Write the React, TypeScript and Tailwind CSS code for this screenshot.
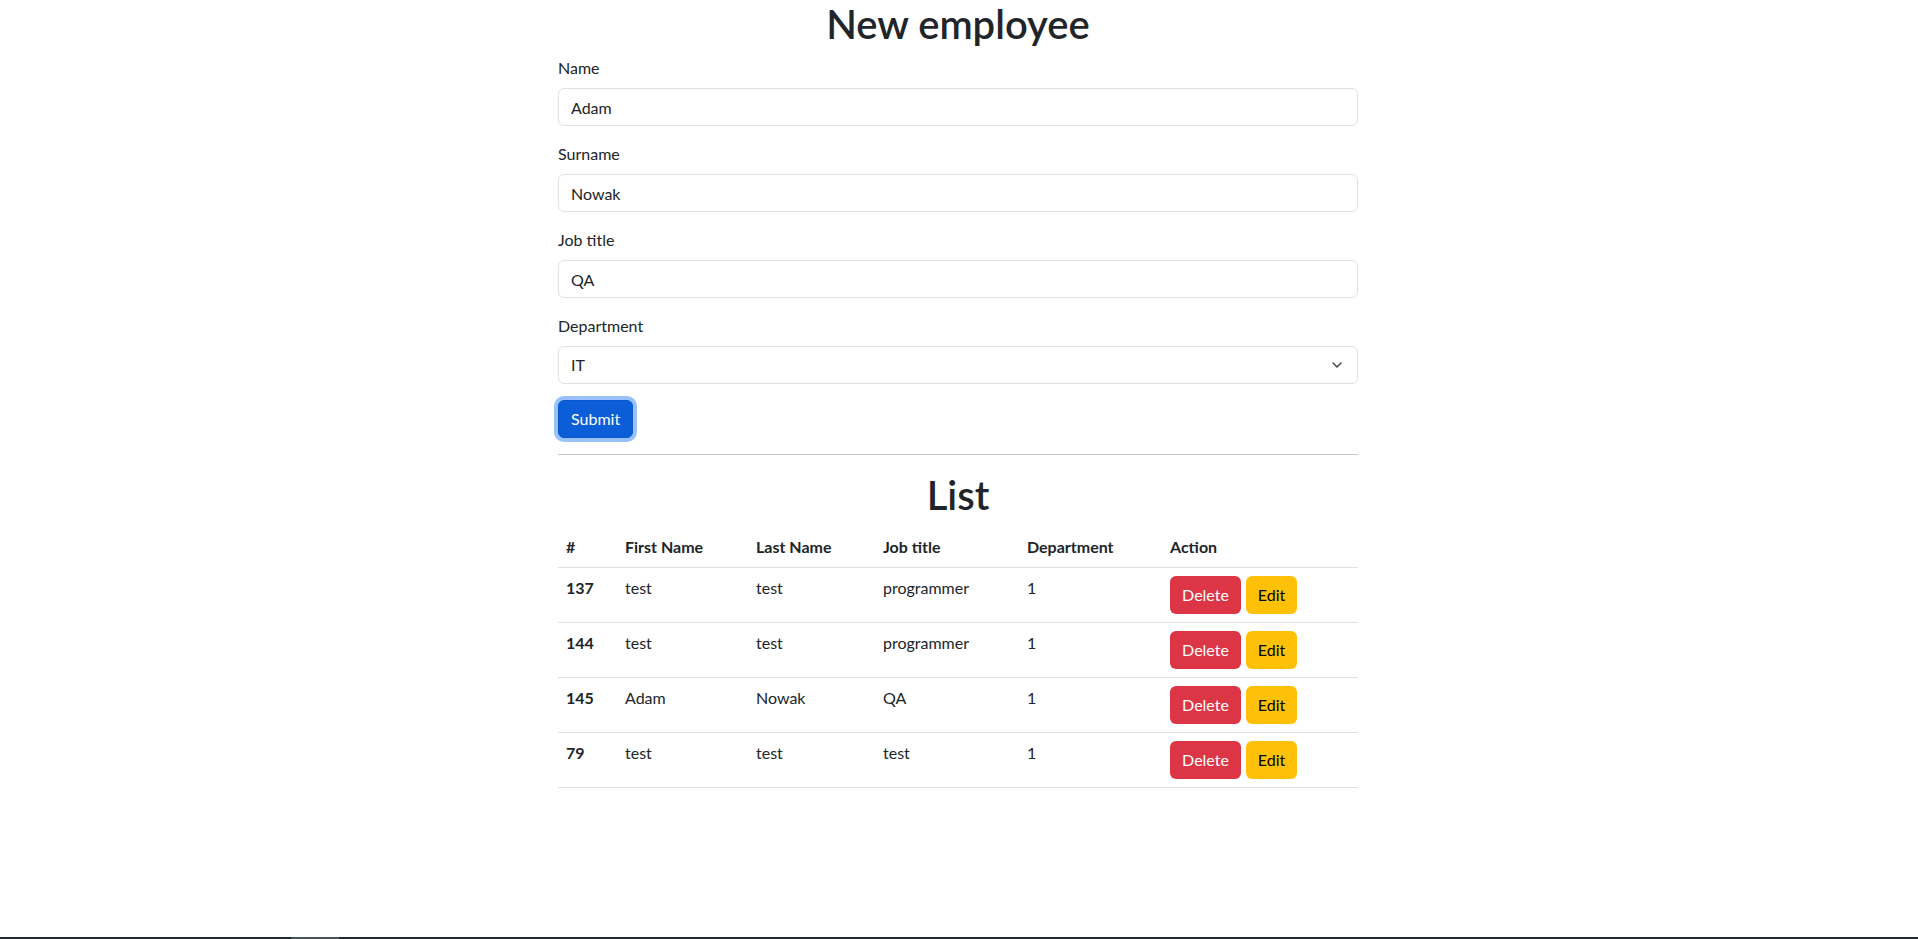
import { ChevronDown } from "lucide-react"

const rows = [
  { id: 137, first: "test", last: "test", job: "programmer", dept: "1" },
  { id: 144, first: "test", last: "test", job: "programmer", dept: "1" },
  { id: 145, first: "Adam", last: "Nowak", job: "QA", dept: "1" },
  { id: 79, first: "test", last: "test", job: "test", dept: "1" },
]

function Field({ label, value }: { label: string; value: string }) {
  return (
    <div className="mb-4">
      <label className="block mb-2 leading-6">{label}</label>
      <input
        readOnly
        value={value}
        className="block w-full h-[38px] px-3 py-1.5 leading-6 border border-[#dee2e6] rounded-[6px] text-[#212529] outline-none"
      />
    </div>
  )
}

export default function App() {
  return (
    <div
      className="flex flex-col h-screen bg-white text-[#212529] text-base leading-6"
      style={{ fontFamily: "Lato, 'Noto Sans', sans-serif" }}
    >
      <div className="w-full pr-[2px]">
        <div className="w-[800px] mx-auto">
          <h1 className="text-[40px] leading-[48px] font-semibold text-center mb-2">New employee</h1>

          <Field label="Name" value="Adam" />
          <Field label="Surname" value="Nowak" />
          <Field label="Job title" value="QA" />

          <div className="mb-4">
            <label className="block mb-2 leading-6">Department</label>
            <div className="flex items-center justify-between h-[38px] pl-3 pr-[12px] border border-[#dee2e6] rounded-[6px]">
              <span>IT</span>
              <ChevronDown className="w-4 h-4 text-[#343a40]" strokeWidth={2} />
            </div>
          </div>

          <button className="h-[38px] px-3 leading-6 text-white bg-[#0b5ed7] border border-[#0a58ca] rounded-[6px] shadow-[0_0_0_4px_rgba(49,132,253,0.5)]">
            Submit
          </button>

          <hr className="mt-4 mb-0 border-t border-[#c8c9ca]" />

          <h1 className="mt-4 text-[40px] leading-[48px] font-semibold text-center mb-2">List</h1>

          <table className="w-full border-collapse align-top table-fixed">
            <thead>
              <tr className="border-b border-[#dee2e6]">
                <th className="w-[59px] p-2 text-left font-bold">#</th>
                <th className="w-[131px] p-2 text-left font-bold">First Name</th>
                <th className="w-[127px] p-2 text-left font-bold">Last Name</th>
                <th className="w-[144px] p-2 text-left font-bold">Job title</th>
                <th className="w-[143px] p-2 text-left font-bold">Department</th>
                <th className="p-2 text-left font-bold">Action</th>
              </tr>
            </thead>
            <tbody>
              {rows.map((r) => (
                <tr key={r.id} className="border-b border-[#dee2e6] align-top">
                  <th className="p-2 text-left font-bold">{r.id}</th>
                  <td className="p-2">{r.first}</td>
                  <td className="p-2">{r.last}</td>
                  <td className="p-2">{r.job}</td>
                  <td className="p-2">{r.dept}</td>
                  <td className="p-2">
                    <div className="flex gap-[5px]">
                      <button className="w-[71px] h-[38px] leading-6 text-white bg-[#dc3545] rounded-[6px]">
                        Delete
                      </button>
                      <button className="w-[51px] h-[38px] leading-6 text-black bg-[#ffc107] rounded-[6px]">
                        Edit
                      </button>
                    </div>
                  </td>
                </tr>
              ))}
            </tbody>
          </table>
        </div>
      </div>

      <div className="mt-auto flex h-[2px] bg-[#1d2a30]">
        <div className="w-[291px]" />
        <div className="w-[48px] bg-[#4a5258]" />
      </div>
    </div>
  )
}
